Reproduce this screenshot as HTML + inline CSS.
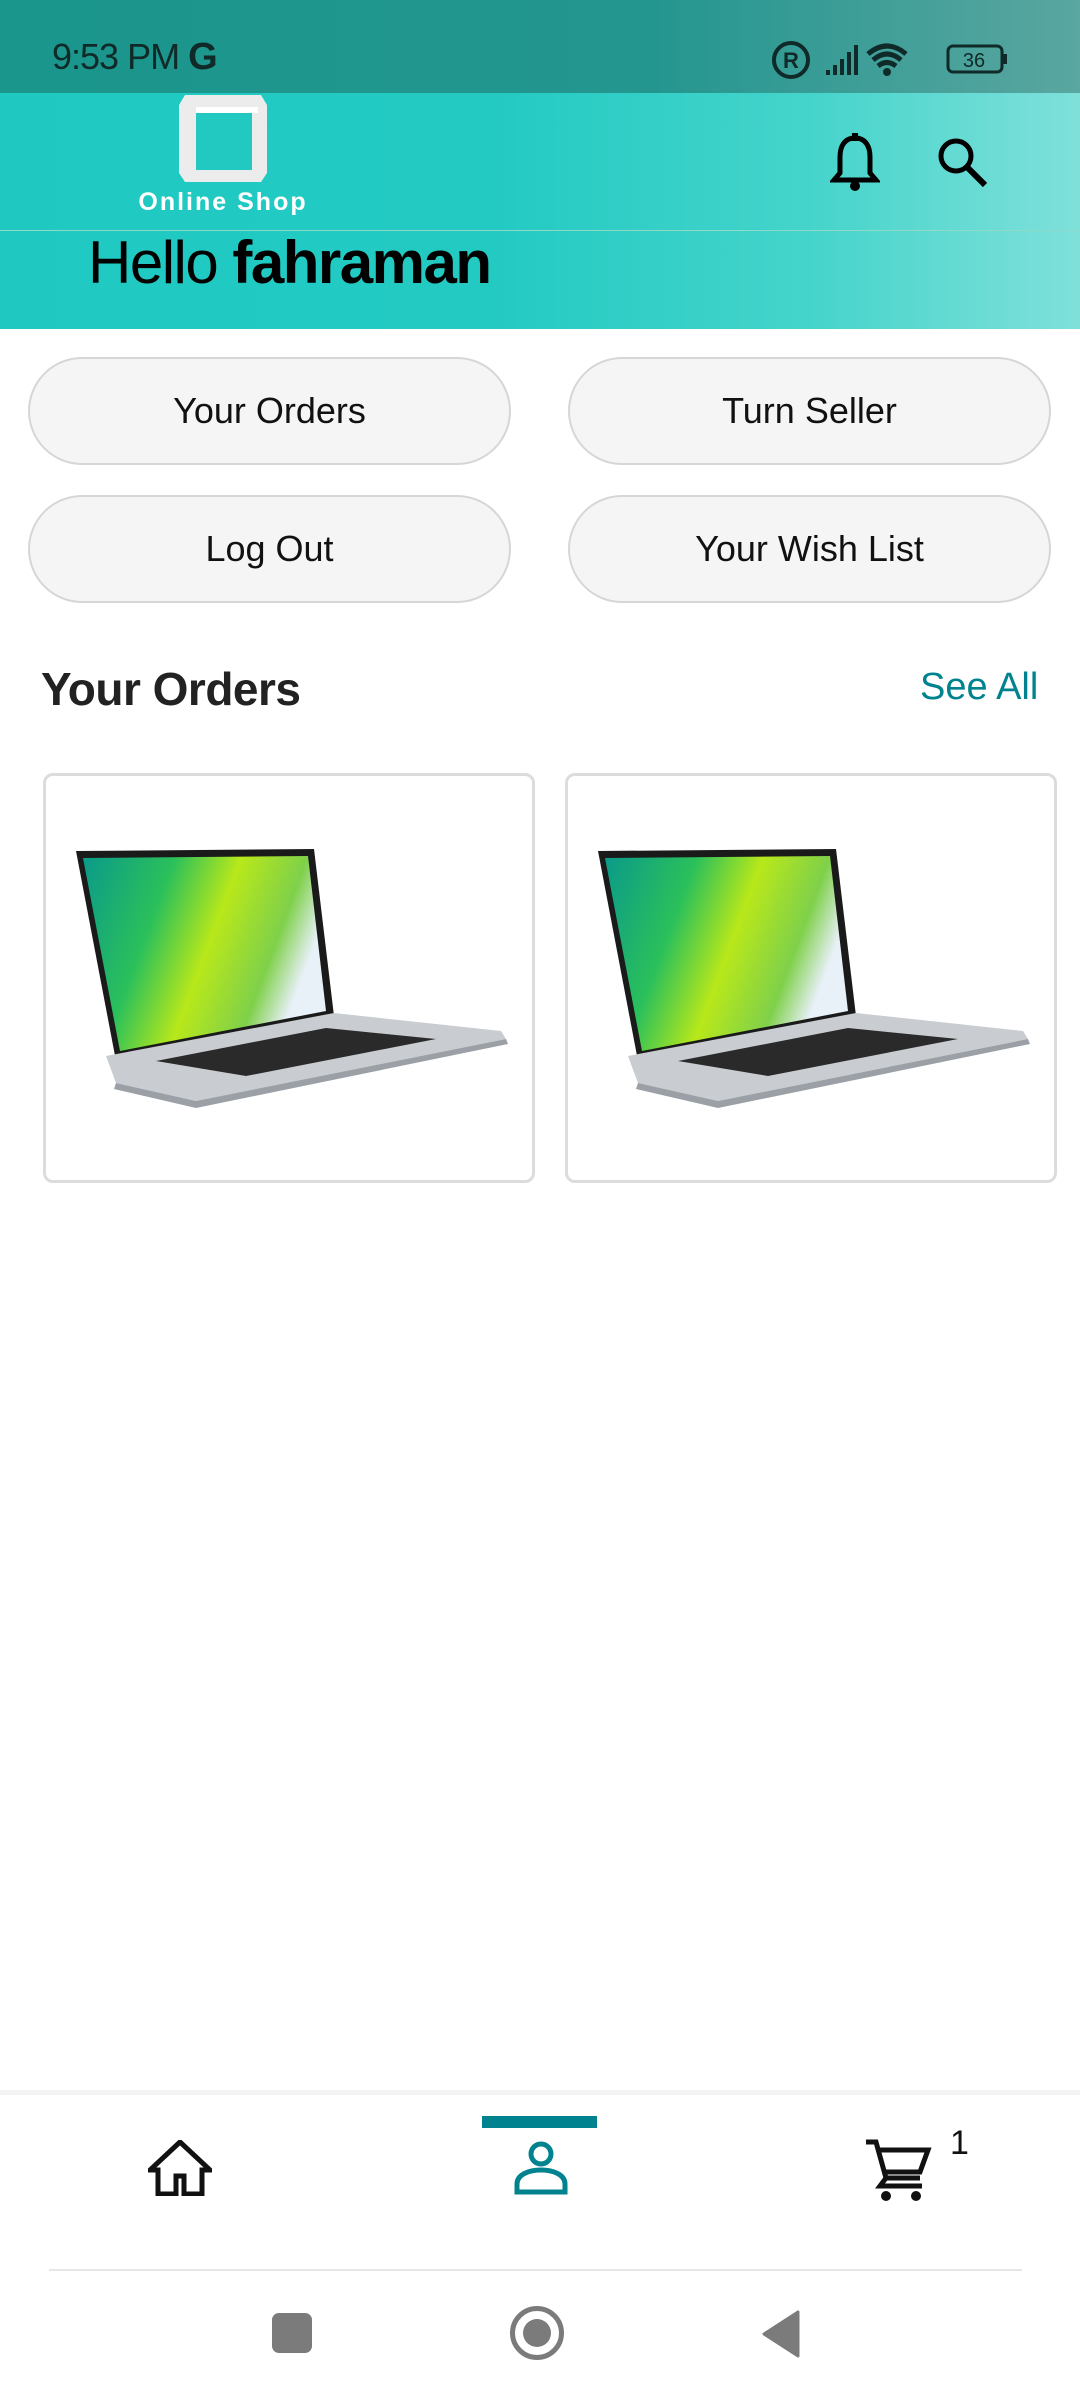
<!DOCTYPE html>
<html><head><meta charset="utf-8"><style>
*{margin:0;padding:0;box-sizing:border-box}
body{width:1080px;height:2400px;background:#fff;font-family:"Liberation Sans",Roboto,sans-serif;position:relative;overflow:hidden;color:#222}
.abs{position:absolute}
.status{left:0;top:0;width:1080px;height:93px;background:linear-gradient(90deg,#1a968c 0%,#23968f 60%,#5aa6a0 100%)}
.header{left:0;top:93px;width:1080px;height:236px;background:linear-gradient(90deg,#1fc9c1 0%,#22cac2 45%,#45d4cb 75%,#7fe0da 100%)}
.btn{position:absolute;width:483px;height:108px;border:2px solid #d6d6d6;border-radius:54px;background:#f5f5f5;font-size:36px;display:flex;align-items:center;justify-content:center;color:#111}
.card{position:absolute;width:492px;height:410px;border:3px solid #dcdcdc;border-radius:10px;background:#fff}
</style></head><body>
<div class="abs status"></div>
<div class="abs" style="left:52px;top:36px;font-size:36px;color:#0f2a28;letter-spacing:-1px">9:53 PM <b style="font-size:38px">G</b></div>
<svg class="abs" style="left:770px;top:40px" width="250" height="40" viewBox="0 0 250 40">
<circle cx="21" cy="20" r="17" fill="none" stroke="#0f2a28" stroke-width="4"/><text x="21" y="28" font-size="22" font-weight="bold" text-anchor="middle" fill="#0f2a28" font-family="Liberation Sans">R</text>
<rect x="56" y="30" width="4" height="5" fill="#0f2a28"/><rect x="63" y="25" width="4" height="10" fill="#0f2a28"/><rect x="70" y="19" width="4" height="16" fill="#0f2a28"/><rect x="77" y="12" width="4" height="23" fill="#0f2a28"/><rect x="84" y="5" width="4" height="30" fill="#0f2a28"/>
<path d="M98 14 Q117 -2 136 14 M103 20 Q117 8 131 20 M108 26 Q117 19 126 26" fill="none" stroke="#0f2a28" stroke-width="5"/><circle cx="117" cy="32" r="4" fill="#0f2a28"/>
<rect x="178" y="6" width="54" height="26" rx="5" fill="none" stroke="#0f2a28" stroke-width="3"/><rect x="233" y="14" width="4" height="10" fill="#0f2a28"/><text x="204" y="27" font-size="20" text-anchor="middle" fill="#0f2a28" font-family="Liberation Sans">36</text>
</svg>
<div class="abs header"></div>
<div class="abs" style="left:0;top:230px;width:1080px;height:1px;background:#8fd9c8"></div>
<svg class="abs" style="left:179px;top:95px" width="88" height="87" viewBox="0 0 88 87">
<path d="M6 0 H82 L88 10 V78 L82 87 H6 L0 78 V10 Z" fill="#ececec"/><rect x="17" y="18" width="56" height="57" fill="#22c9c1"/><rect x="17" y="12" width="62" height="6" fill="#fff"/>
</svg>
<div class="abs" style="left:100px;top:188px;width:246px;text-align:center;font-size:25px;font-weight:bold;color:#fff;letter-spacing:2px;white-space:nowrap">Online Shop</div>
<svg class="abs" style="left:830px;top:133px" width="50" height="58" viewBox="0 0 50 58">
<path d="M25 5 C14 5 10 14 10 24 V40 L4 47 H46 L40 40 V24 C40 14 36 5 25 5Z" fill="none" stroke="#000" stroke-width="5"/><rect x="22" y="0" width="6" height="8" fill="#000"/><circle cx="25" cy="53" r="5" fill="#000"/>
</svg>
<svg class="abs" style="left:935px;top:135px" width="56" height="56" viewBox="0 0 56 56">
<circle cx="21" cy="21" r="15" fill="none" stroke="#000" stroke-width="5"/><path d="M32 32 L50 50" stroke="#000" stroke-width="6"/>
</svg>
<div class="abs" style="left:88px;top:228px;font-size:60px;color:#000;letter-spacing:-1.5px">Hello <b>fahraman</b></div>

<div class="btn" style="left:28px;top:357px">Your Orders</div>
<div class="btn" style="left:568px;top:357px">Turn Seller</div>
<div class="btn" style="left:28px;top:495px">Log Out</div>
<div class="btn" style="left:568px;top:495px">Your Wish List</div>

<div class="abs" style="left:41px;top:662px;font-size:46px;font-weight:bold;color:#222;letter-spacing:-0.5px">Your Orders</div>
<div class="abs" style="left:920px;top:666px;font-size:38px;color:#00838f">See All</div>

<svg width="0" height="0" style="position:absolute"><defs>
<linearGradient id="scr" x1="0" y1="0" x2="1" y2="0.3"><stop offset="0" stop-color="#0a9a8a"/><stop offset="0.35" stop-color="#2bc05a"/><stop offset="0.6" stop-color="#b8e81a"/><stop offset="0.85" stop-color="#7fd04a"/><stop offset="1" stop-color="#e8f0f8"/></linearGradient>
</defs></svg>
<div class="card" style="left:43px;top:773px">
<svg width="486" height="404" viewBox="0 0 486 404"><g transform="translate(30,75)">
<path d="M0 0 L238 -2 L258 165 L40 210 Z" fill="#1a1a1a"/><path d="M7 7 L232 5 L250 160 L44 200 Z" fill="url(#scr)"/>
<path d="M30 205 L258 162 L425 180 L430 188 L120 250 L40 232 Z" fill="#c9ccd0"/><path d="M80 210 L250 177 L360 188 L170 225 Z" fill="#2a2a2a"/>
<path d="M40 232 L120 250 L430 188 L432 193 L120 257 L38 238 Z" fill="#9aa0a6"/></g></svg>
</div>
<div class="card" style="left:565px;top:773px">
<svg width="486" height="404" viewBox="0 0 486 404"><g transform="translate(30,75)">
<path d="M0 0 L238 -2 L258 165 L40 210 Z" fill="#1a1a1a"/><path d="M7 7 L232 5 L250 160 L44 200 Z" fill="url(#scr)"/>
<path d="M30 205 L258 162 L425 180 L430 188 L120 250 L40 232 Z" fill="#c9ccd0"/><path d="M80 210 L250 177 L360 188 L170 225 Z" fill="#2a2a2a"/>
<path d="M40 232 L120 250 L430 188 L432 193 L120 257 L38 238 Z" fill="#9aa0a6"/></g></svg>
</div>

<div class="abs" style="left:0;top:2090px;width:1080px;height:5px;background:#f3f3f3"></div>
<div class="abs" style="left:482px;top:2116px;width:115px;height:12px;background:#00838f"></div>
<svg class="abs" style="left:148px;top:2140px" width="64" height="56" viewBox="0 0 64 56">
<path d="M32 2 L2 30 H10 V54 H28 V36 H36 V54 H54 V30 H62 Z" fill="none" stroke="#111" stroke-width="5" stroke-linejoin="miter"/></svg>
<svg class="abs" style="left:512px;top:2140px" width="58" height="56" viewBox="0 0 58 56">
<circle cx="29" cy="14" r="10" fill="none" stroke="#00838f" stroke-width="5"/><path d="M5 52 V44 C5 34 18 30 29 30 C40 30 53 34 53 44 V52 Z" fill="none" stroke="#00838f" stroke-width="5"/></svg>
<svg class="abs" style="left:864px;top:2138px" width="70" height="66" viewBox="0 0 70 66">
<path d="M2 4 H12 L22 40 H56 M15 12 H64 L56 34 H20" fill="none" stroke="#111" stroke-width="5"/><path d="M22 40 L16 48 H58" fill="none" stroke="#111" stroke-width="5"/><circle cx="22" cy="58" r="5" fill="#111"/><circle cx="52" cy="58" r="5" fill="#111"/></svg>
<div class="abs" style="left:950px;top:2124px;font-size:34px;color:#111">1</div>
<div class="abs" style="left:49px;top:2269px;width:973px;height:2px;background:#e6e6e6"></div>
<div class="abs" style="left:272px;top:2313px;width:40px;height:40px;border-radius:7px;background:#7b7b7b"></div>
<div class="abs" style="left:510px;top:2306px;width:54px;height:54px;border-radius:50%;border:5px solid #7b7b7b"></div>
<div class="abs" style="left:523px;top:2319px;width:28px;height:28px;border-radius:50%;background:#7b7b7b"></div>
<svg class="abs" style="left:760px;top:2310px" width="42" height="48" viewBox="0 0 42 48"><path d="M38 2 V46 L4 24 Z" fill="#7b7b7b" stroke="#7b7b7b" stroke-width="3" stroke-linejoin="round"/></svg>
</body></html>
